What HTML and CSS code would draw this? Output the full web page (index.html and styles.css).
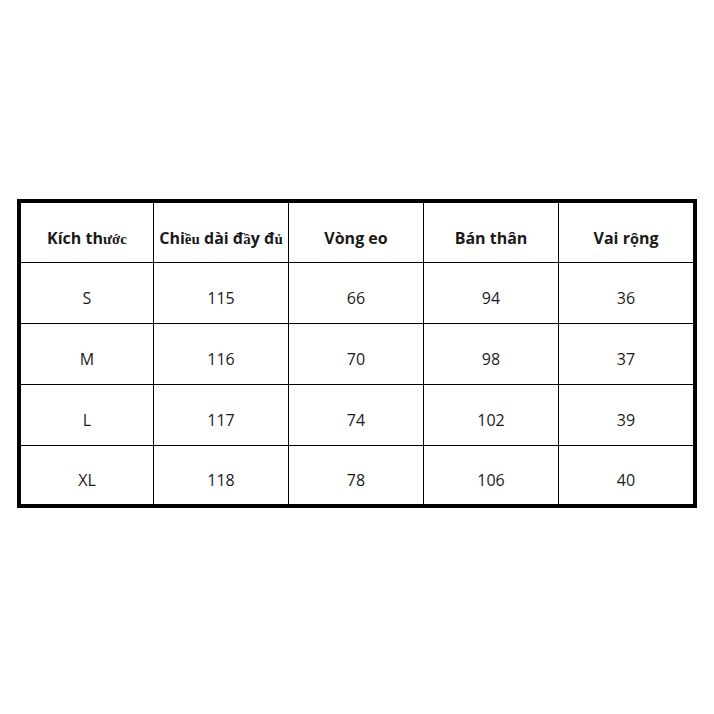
FILE: index.html
```html
<!DOCTYPE html>
<html lang="vi">
<head>
<meta charset="utf-8">
<title>Bảng kích thước</title>
<link rel="stylesheet" href="styles.css">
</head>
<body>
<div class="page">
  <table class="size-table">
    <colgroup>
      <col class="c1"><col class="c2"><col class="c3"><col class="c4"><col class="c5">
    </colgroup>
    <thead>
      <tr class="head">
        <th>Kích th<span class="fb">ước</span></th>
        <th>Chi<span class="fb">ều</span> dài đ<span class="fb">ầ</span>y đ<span class="fb">ủ</span></th>
        <th>Vòng eo</th>
        <th>Bán thân</th>
        <th>Vai r<span class="fb2">ộ</span>ng</th>
      </tr>
    </thead>
    <tbody>
      <tr class="r"><td>S</td><td>115</td><td>66</td><td>94</td><td>36</td></tr>
      <tr class="r"><td>M</td><td>116</td><td>70</td><td>98</td><td>37</td></tr>
      <tr class="r"><td>L</td><td>117</td><td>74</td><td>102</td><td>39</td></tr>
      <tr class="r last"><td>XL</td><td>118</td><td>78</td><td>106</td><td>40</td></tr>
    </tbody>
  </table>
</div>
</body>
</html>
```

FILE: styles.css
```css
html, body {
  margin: 0;
  padding: 0;
  background: #ffffff;
}
.page {
  padding: 199px 17px 0 17px;
}
.size-table {
  width: 680px;
  border: 4px solid #000;
  border-collapse: separate;
  border-spacing: 0;
  table-layout: fixed;
  font-family: "Open Sans", "Noto Sans", sans-serif;
  font-size: 16px;
  color: #1a1a1a;
}
.c1 { width: 133px; }
.c2 { width: 135px; }
.c3 { width: 135px; }
.c4 { width: 135px; }
.c5 { width: 134px; }
.size-table th,
.size-table td {
  text-align: center;
  padding: 10px 0 0 0;
  border-right: 1px solid #000;
  border-bottom: 1px solid #000;
  white-space: nowrap;
  overflow: visible;
  box-sizing: border-box;
}
.size-table th:last-child,
.size-table td:last-child {
  border-right: none;
}
.head th {
  height: 60px;
  font-weight: 700;
  font-size: 16px;
}
.r td {
  height: 61px;
  font-weight: 400;
}
.r.last td {
  height: 58px;
  border-bottom: none;
}
.fb {
  font-family: "Liberation Serif", serif;
  font-size: 15px;
  font-weight: 700;
}
.fb2 {
  font-size: 14.5px;
}
```
